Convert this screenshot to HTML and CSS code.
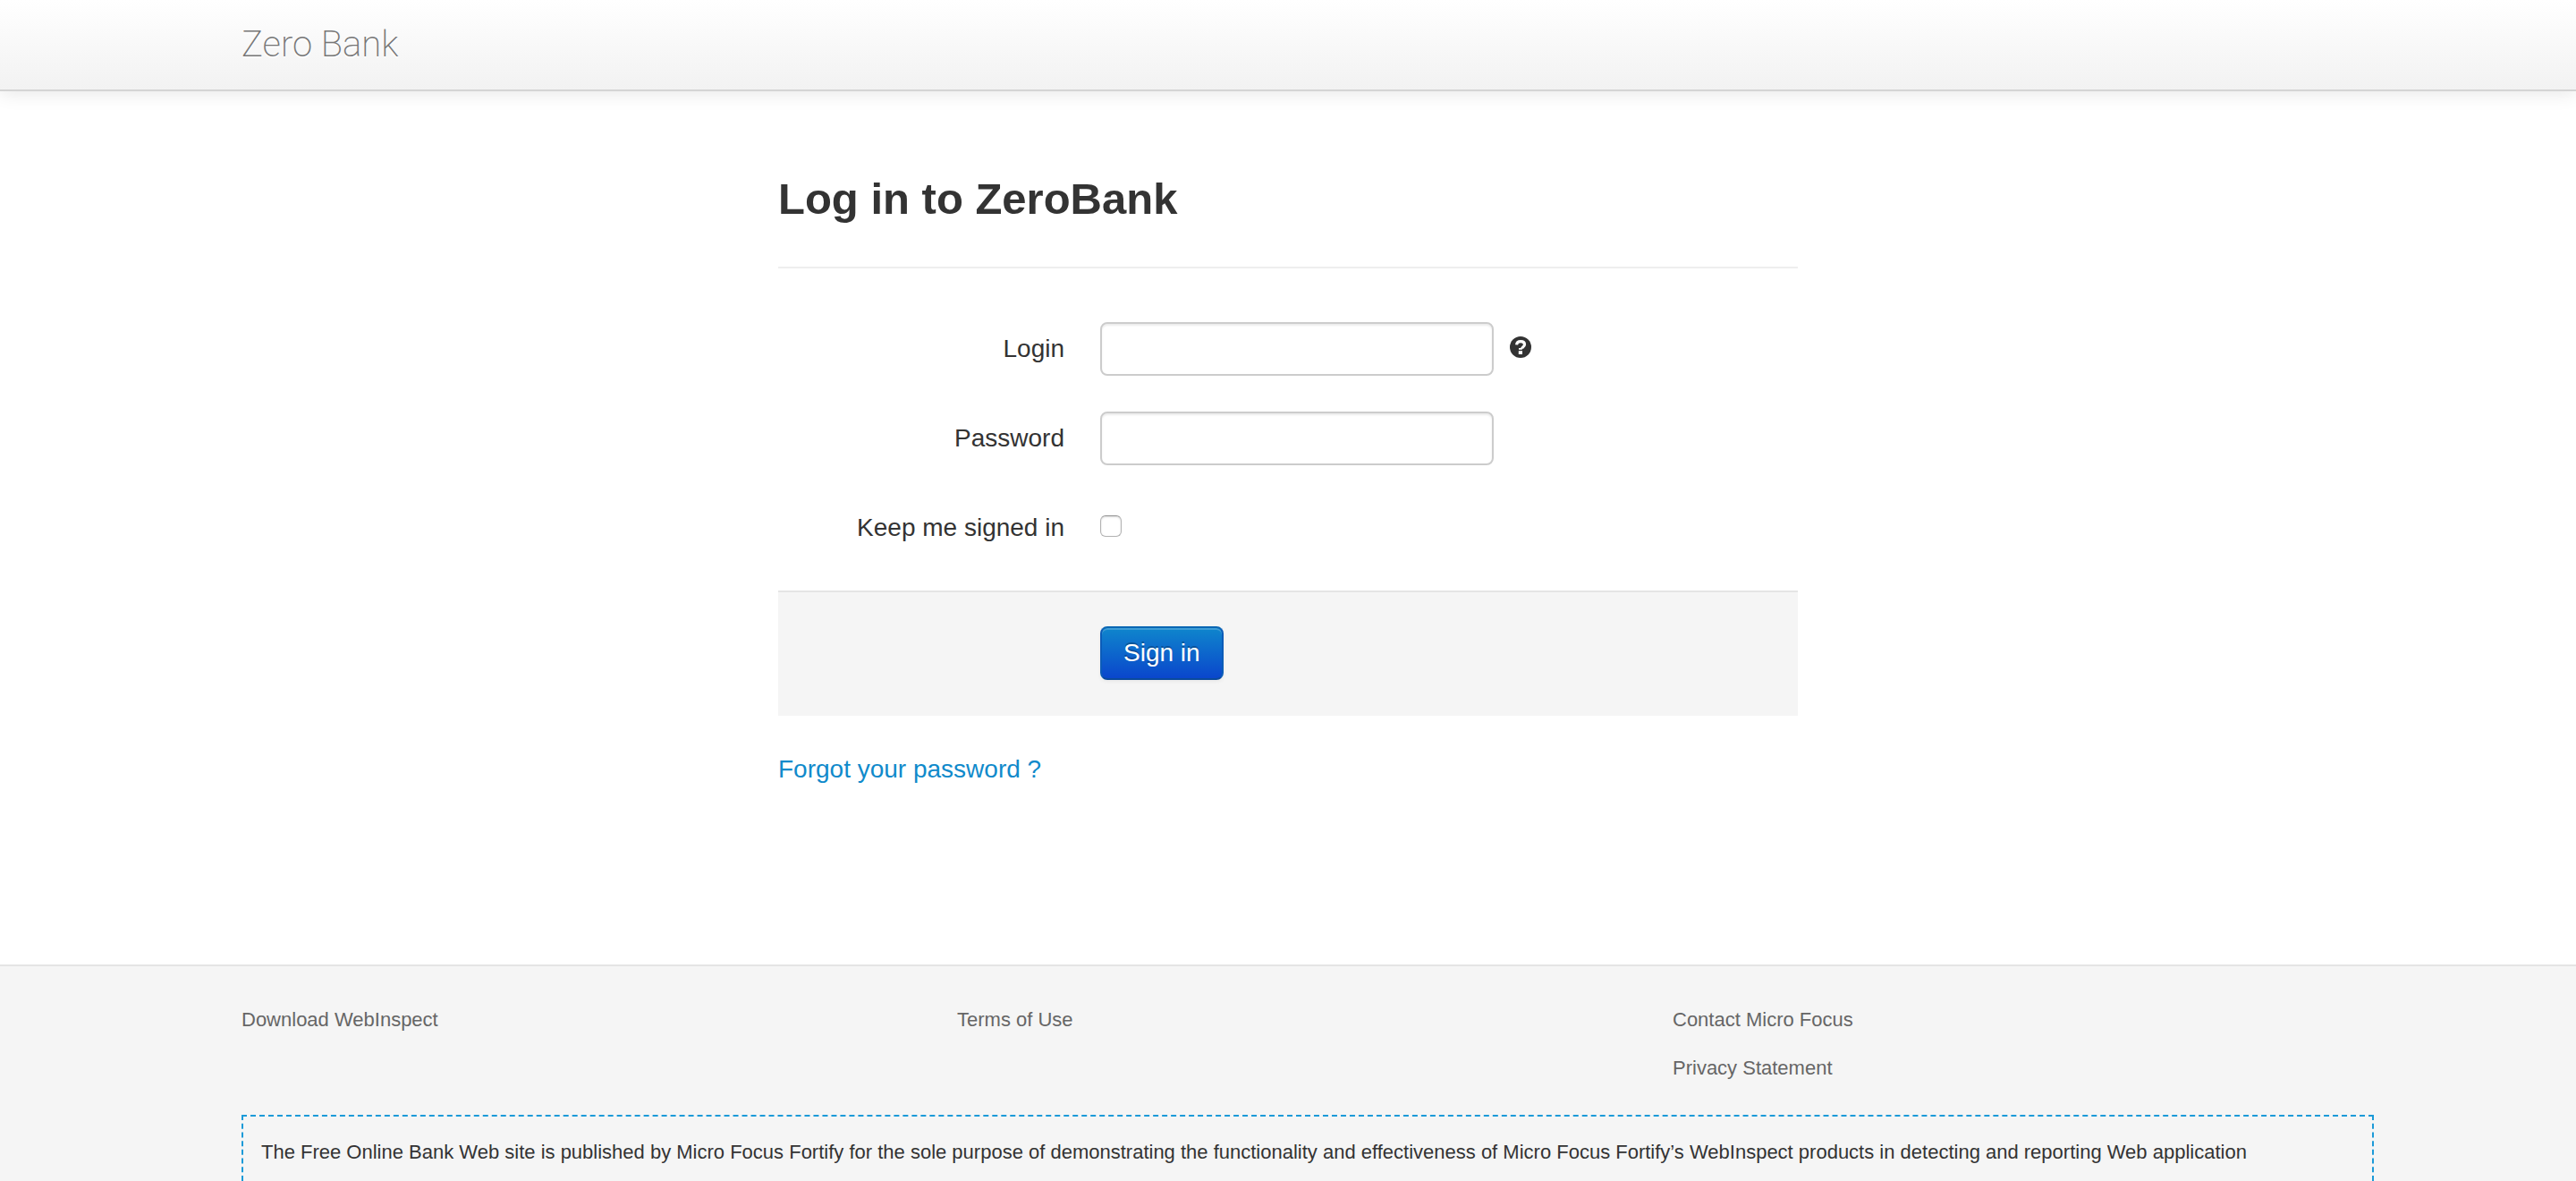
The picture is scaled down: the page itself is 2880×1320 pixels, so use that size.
FILE: index.html
```html
<!DOCTYPE html>
<html lang="en">
<head>
  <meta charset="utf-8">
  <meta name="viewport" content="width=device-width, initial-scale=1">
  <title>Zero - Log in</title>
  <link rel="stylesheet" href="styles.css">
</head>
<body>
  <header class="navbar">
    <div class="container">
      <a class="brand" href="#">Zero Bank</a>
    </div>
  </header>

  <main class="login">
    <h1 class="page-title">Log in to ZeroBank</h1>
    <form class="login-form">
      <div class="control-group">
        <label class="control-label" for="user_login">Login</label>
        <div class="controls">
          <input class="text-input" type="text" id="user_login">
          <svg class="help-icon" viewBox="0 0 24 24" role="img" aria-label="Help">
            <circle cx="12" cy="12" r="12" fill="#333"/>
            <path d="M7.6 9.4C7.8 6.800 9.700 5.700 12.200 5.700C14.700 5.700 16.500 7 16.500 9.100C16.500 10.700 15.600 11.500 14.500 12.200C13.800 12.700 13.600 12.900 13.600 13.700" fill="none" stroke="#fff" stroke-width="3.200"/>
            <rect x="10" y="13" width="3.800" height="1.800" fill="#fff"/>
            <rect x="9.800" y="16.200" width="4.200" height="3.800" fill="#fff"/>
          </svg>
        </div>
      </div>
      <div class="control-group">
        <label class="control-label" for="user_password">Password</label>
        <div class="controls">
          <input class="text-input" type="password" id="user_password">
        </div>
      </div>
      <div class="control-group">
        <label class="control-label" for="user_remember_me">Keep me signed in</label>
        <div class="controls">
          <input class="checkbox" type="checkbox" id="user_remember_me">
        </div>
      </div>
      <div class="form-actions">
        <button class="btn-primary" type="submit">Sign in</button>
      </div>
    </form>
    <a class="forgot" href="#">Forgot your password ?</a>
  </main>

  <footer class="footer">
    <div class="container footer-inner">
      <div class="footer-links">
        <ul class="link-list">
          <li><a href="#">Download WebInspect</a></li>
        </ul>
        <ul class="link-list">
          <li><a href="#">Terms of Use</a></li>
        </ul>
        <ul class="link-list">
          <li><a href="#">Contact Micro Focus</a></li>
          <li><a href="#">Privacy Statement</a></li>
        </ul>
      </div>
      <p class="disclaimer">The Free Online Bank Web site is published by Micro Focus Fortify for the sole purpose of demonstrating the functionality and effectiveness of Micro Focus Fortify’s WebInspect products in detecting and reporting Web application</p>
    </div>
  </footer>
</body>
</html>
```
FILE: styles.css
```css
* {
  box-sizing: border-box;
}

body {
  display: flex;
  flex-direction: column;
  min-height: 100vh;
  margin: 0;
  background: #fff;
  color: #333;
  font: 28px/40px "Helvetica Neue", "Liberation Sans", Arial, sans-serif;
}

.container {
  width: 100%;
  max-width: 2340px;
  margin: 0 auto;
}

.navbar {
  padding: 30px 0;
  border-bottom: 2px solid #d4d4d4;
  background: linear-gradient(#fff, #f2f2f2);
  box-shadow: 0 2px 20px rgba(0, 0, 0, 0.1);
}

.brand {
  display: block;
  color: #777;
  font-family: Roboto, "Liberation Sans", sans-serif;
  font-size: 40px;
  font-weight: 200;
  text-decoration: none;
  text-shadow: 0 2px 0 #fff;
}

.login {
  width: 100%;
  max-width: 1140px;
  margin: 0 auto;
  padding: 80px 0 198px;
}

.page-title {
  margin: 0 0 60px;
  padding: 0 0 36px;
  border-bottom: 2px solid #eee;
  font-size: 49px;
  line-height: 80px;
}

.control-group {
  display: flex;
  gap: 40px;
  min-height: 60px;
  margin-bottom: 40px;
}

.control-label {
  width: 320px;
  padding-top: 10px;
  text-align: right;
}

.controls {
  display: flex;
  align-items: flex-start;
  gap: 18px;
}

.text-input {
  width: 440px;
  height: 60px;
  padding: 8px 12px;
  border: 2px solid #ccc;
  border-radius: 8px;
  background: #fff;
  box-shadow: inset 0 2px 2px rgba(0, 0, 0, 0.075);
  color: #555;
  font: inherit;
}

.help-icon {
  width: 24px;
  height: 24px;
  margin-top: 16px;
}

.checkbox {
  appearance: none;
  width: 24px;
  height: 24px;
  margin: 16px 0 0;
  border: 1px solid #b2b2b2;
  border-top-color: #949494;
  border-radius: 6px;
  background: #fff;
  box-shadow: inset 0 1px 2px rgba(0, 0, 0, 0.15);
}

.form-actions {
  padding: 38px 0 40px 360px;
  border-top: 2px solid #e5e5e5;
  background: #f5f5f5;
}

.btn-primary {
  display: block;
  height: 60px;
  padding: 0 24px;
  border: 2px solid;
  border-color: #0a67b4 #0b5cb8 #0a4a9c;
  border-radius: 8px;
  background: linear-gradient(#0f88cc, #0a44cc) border-box;
  box-shadow: inset 0 2px 0 rgba(255, 255, 255, 0.2), 0 2px 4px rgba(0, 0, 0, 0.05);
  color: #fff;
  font: inherit;
  text-shadow: 0 -2px 0 rgba(0, 0, 0, 0.25);
}

.forgot {
  display: block;
  width: fit-content;
  margin-top: 40px;
  color: #108acb;
  text-decoration: none;
}

.footer {
  display: flex;
  flex: 1;
  border-top: 2px solid #e5e5e5;
  background: #f5f5f5;
  font-size: 22px;
}

.footer-inner {
  display: flex;
  flex-direction: column;
  padding-top: 40px;
}

.footer-links {
  display: grid;
  grid-template-columns: repeat(3, 1fr);
  gap: 60px;
  margin-bottom: 32px;
}

.link-list {
  display: grid;
  align-content: start;
  gap: 14px;
  margin: 0;
  padding: 0;
  list-style: none;
}

.link-list a {
  color: #666;
  text-decoration: none;
}

.disclaimer {
  box-sizing: content-box;
  flex: 1;
  width: 100%;
  margin: 0;
  padding: 20px 20px 0;
  border: 2px dashed #1b9ad8;
  border-bottom: 0;
}
```
